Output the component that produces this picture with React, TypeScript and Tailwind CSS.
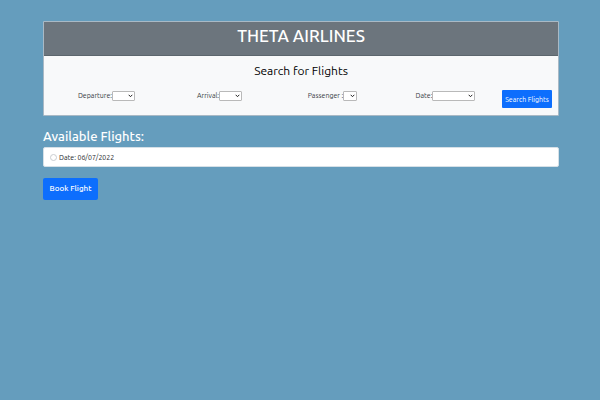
import React from "react";

type FieldProps = { id: string; label: string; width: string };

const fields: FieldProps[] = [
  { id: "departure", label: "Departure:", width: "w-[23px]" },
  { id: "arrival", label: "Arrival:", width: "w-[23px]" },
  { id: "passenger", label: "Passenger :", width: "w-[14px]" },
  { id: "date", label: "Date:", width: "w-[43px]" },
];

function SelectField({ id, label, width }: FieldProps) {
  return (
    <div className="flex flex-1 items-center justify-center">
      <label htmlFor={id} className="whitespace-nowrap text-[7px] leading-[11px] text-[#33373c]">
        {label}
      </label>
      <span className="relative flex">
        <select
          id={id}
          className={`h-[10px] appearance-none rounded-[1px] border border-[#b9b9b9] bg-white text-[7px] ${width}`}
        />
        <svg
          viewBox="0 0 5 4"
          className="pointer-events-none absolute top-[3px] right-[2px] h-[4px] w-[5px]"
          fill="none"
          stroke="#222222"
          strokeWidth="1"
        >
          <path d="M0.7 0.8 2.5 2.7 4.3 0.8" />
        </svg>
      </span>
    </div>
  );
}

export default function App() {
  return (
    <div className="min-h-screen bg-[#659dbd] pt-[21px] pr-[41px] pl-[43px] font-['Ubuntu','Roboto',sans-serif]">
      <main>
        <section className="rounded-[1px] border border-[#a9b9c5] bg-[#f8f9fa]">
          <header className="border-b border-[#5c666d] bg-[#6c757d] text-center">
            <h1 className="pb-[5px] text-[17px] leading-[28px] font-medium text-white">THETA AIRLINES</h1>
          </header>
          <div className="px-[6px] pt-[6px] pb-[7px]">
            <h2 className="text-center text-[12px] leading-[18px] text-black">Search for Flights</h2>
            <form className="mt-[10px] flex items-start" onSubmit={(e) => e.preventDefault()}>
              {fields.map((field) => (
                <SelectField key={field.id} {...field} />
              ))}
              <button
                type="submit"
                className="h-[18px] w-[50px] rounded-[1px] bg-[#0d6efd] text-[7px] whitespace-nowrap text-white"
              >
                Search Flights
              </button>
            </form>
          </div>
        </section>

        <h2 className="mt-[10px] text-[13px] leading-[20px] font-medium text-white">Available Flights:</h2>
        <div className="mt-px flex h-[20px] items-center gap-[2px] rounded-[2px] border border-[#d5e0e7] bg-white px-[6px]">
          <input
            id="flight"
            type="radio"
            name="flight"
            className="size-[7px] appearance-none rounded-full border border-[#c9cdd1] bg-white checked:bg-[#0d6efd]"
          />
          <label htmlFor="flight" className="text-[7px] leading-[11px] text-[#212529]">
            Date: 06/07/2022
          </label>
        </div>
        <button type="button" className="mt-[11px] h-[22px] w-[55px] rounded-[2px] bg-[#0d6efd] text-[8px] font-medium text-white">
          Book Flight
        </button>
      </main>
    </div>
  );
}
